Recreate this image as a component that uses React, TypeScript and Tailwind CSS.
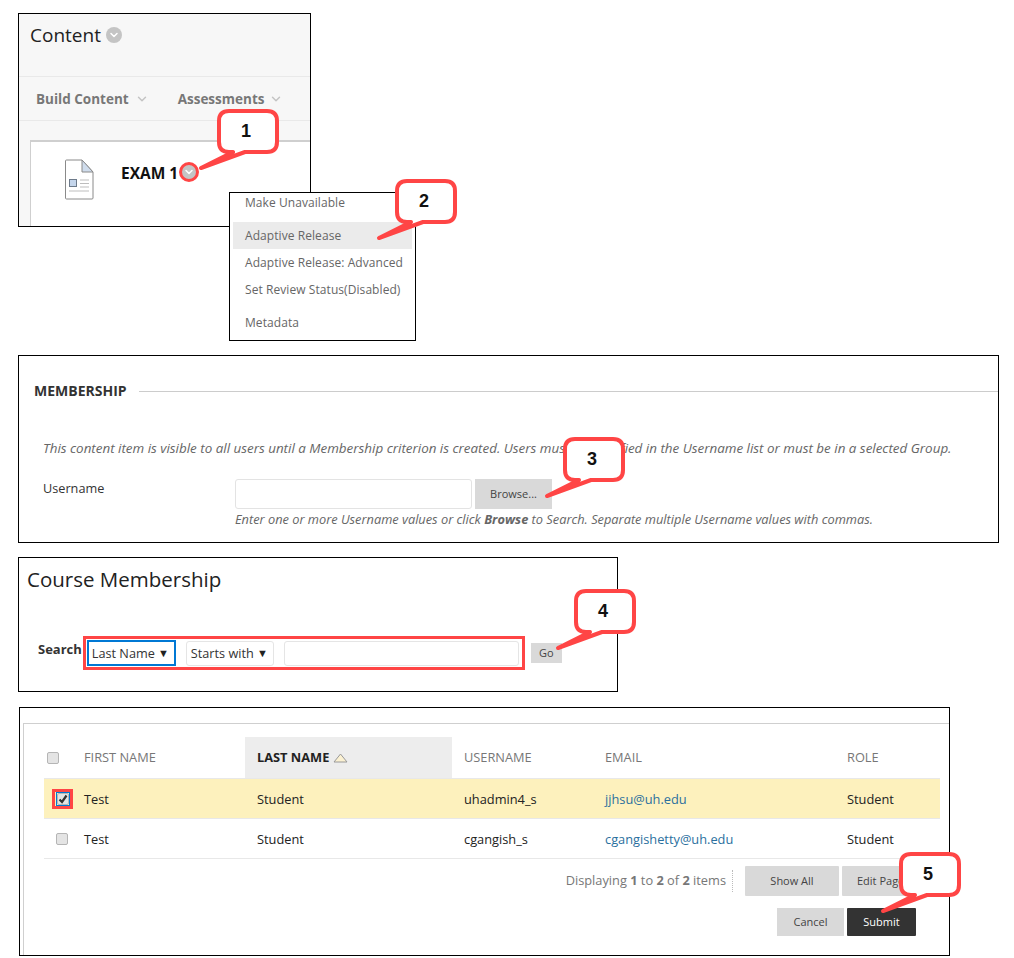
import { ChevronDown } from 'lucide-react';

const openSans = { fontFamily: '"Open Sans", sans-serif' };

function CircleChevron() {
  return (
    <span className="flex h-4 w-4 items-center justify-center rounded-full bg-[#c4c4c4]">
      <ChevronDown className="h-3 w-3 text-white" strokeWidth={3} />
    </span>
  );
}

// numbered red speech bubble, left/top are the bubble's box on the page
function Callout({ n, left, top }: { n: number; left: number; top: number }) {
  return (
    <div className="absolute z-20 h-[45px] w-[62px]" style={{ left, top }}>
      <svg className="absolute -left-[20px] top-0 overflow-visible" width="82" height="66" viewBox="-20 0 82 66">
        <path
          d="M12 2H50Q60 2 60 12V33Q60 43 50 43H28L-16 59L16 43H12Q2 43 2 33V12Q2 2 12 2Z"
          fill="#fff"
          stroke="#ff4545"
          strokeWidth="4"
          strokeLinejoin="round"
        />
      </svg>
      <span className="absolute left-0 top-[9px] w-[58px] text-center font-['Liberation_Sans',sans-serif] text-[18px] leading-[26px] font-bold text-[#111]">
        {n}
      </span>
    </div>
  );
}

function ContentPanel() {
  return (
    <div className="relative flex h-[214px] w-[293px] flex-col border border-black bg-[#f7f7f7]">
      <div className="flex h-[63px] items-start gap-[5px] border-b border-[#e9e9e9] pl-[11px] pt-[7px]">
        <span className="text-[19px] leading-[28px] text-[#222]">Content</span>
        <span className="mt-[6px]">
          <CircleChevron />
        </span>
      </div>
      <div className="flex h-[44px] items-center border-b border-[#e9e9e9] pl-[17px] pt-[1px] text-[13.5px] font-bold text-[#777]">
        <span>Build Content</span>
        <ChevronDown className="ml-[6px] h-[14px] w-[14px] text-[#c4c4c4]" strokeWidth={2.5} />
        <span className="ml-[29px]">Assessments</span>
        <ChevronDown className="ml-[5px] h-[14px] w-[14px] text-[#c4c4c4]" strokeWidth={2.5} />
      </div>
      <div className="flex-1 pl-[11px] pt-[19px]">
        <div className="flex h-full items-start border-l border-t-2 border-[#cfcfcf] bg-white pl-[33px] pt-[17px]">
          <svg width="30" height="41" viewBox="0 0 30 41">
            <path d="M1.5 2a1 1 0 0 1 1-1H18L29 13V39a1 1 0 0 1-1 1H2.5a1 1 0 0 1-1-1Z" fill="#fff" stroke="#8a8a8a" />
            <path d="M18 1L29 13H18Z" fill="#cfdcec" stroke="#8a8a8a" />
            <rect x="5.5" y="20.5" width="7" height="7" fill="#c5d6ec" stroke="#6d7a8a" />
            <path d="M16 21H25M16 24.5H25M16 28H25M5 32H25" stroke="#bdbdbd" />
          </svg>
          <span className="ml-[27px] mt-[4px] text-[15.5px] leading-[20px] font-bold text-[#111]">EXAM 1</span>
          <span className="relative ml-[3px] mt-[5px]">
            <CircleChevron />
            <span className="absolute -inset-[2px] rounded-full border-[3px] border-[#ff4545]" />
          </span>
        </div>
      </div>
    </div>
  );
}

function ContextMenu() {
  const rowClass = 'pl-[12px] text-[12px] leading-[27px] text-[#666] tracking-[0.07px]';
  return (
    <div className="absolute left-[229px] top-[192px] z-10 h-[149px] w-[187px] border border-black bg-white px-[3px]">
      <div className="pl-[12px] text-[12px] leading-[19px] text-[#666] tracking-[0.07px]">Make Unavailable</div>
      <div className={`${rowClass} mt-[10px] bg-[#ebebeb]`}>Adaptive Release</div>
      <div className={rowClass}>Adaptive Release: Advanced</div>
      <div className={rowClass}>Set Review Status(Disabled)</div>
      <div className={`${rowClass} mt-[6px]`}>Metadata</div>
    </div>
  );
}

function MembershipPanel() {
  return (
    <div className="mt-[128px] h-[188px] w-[981px] border border-black bg-white">
      <div className="flex items-center pl-[15px] pt-[26px]">
        <span className="text-[14px] leading-[18px] font-bold text-[#333]">MEMBERSHIP</span>
        <span className="ml-[12px] h-px flex-1 bg-[#cccccc]" />
      </div>
      <p className="mt-[39px] pl-[24px] text-[13.4px] leading-[18px] text-[#666] italic">
        This content item is visible to all users until a Membership criterion is created. Users must be specified in the Username list or must be in a selected Group.
      </p>
      <div className="mt-[22px] flex items-start pl-[24px]">
        <span className="w-[192px] text-[12.7px] leading-[18px] text-[#333]">Username</span>
        <div>
          <div className="flex gap-[3px]">
            <div className="h-[30px] w-[237px] rounded-[3px] border border-[#e3e3e3] bg-white" />
            <div className="flex h-[30px] w-[77px] items-center justify-center bg-[#d9d9d9] text-[11px] text-[#444]">
              Browse...
            </div>
          </div>
          <p className="mt-[1px] text-[12.8px] leading-[18px] text-[#666] italic">
            Enter one or more Username values or click <b>Browse</b> to Search. Separate multiple Username values with commas.
          </p>
        </div>
      </div>
    </div>
  );
}

function SearchPanel() {
  return (
    <div className="mt-[14px] h-[135px] w-[600px] border border-black bg-white">
      <h2 className="pl-[8px] pt-[6px] text-[20.5px] leading-[30px] font-normal text-[#222]">Course Membership</h2>
      <div className="mt-[42px] flex items-start pl-[19px]">
        <span className="mt-[4px] text-[13px] leading-[18px] font-bold text-[#333]">Search</span>
        <div className="ml-[1px] flex h-[34px] w-[442px] items-center border-[3px] border-[#ff4545] pl-[1px] pr-[3px]">
          <div className="flex h-[26px] w-[89px] items-center justify-between border-2 border-[#0078d4] pl-[3px] pr-[5px] pt-[1px] text-[12.7px] text-[#333]">
            <span>Last Name</span>
            <span className="text-[11px] text-[#222]">▼</span>
          </div>
          <div className="ml-[10px] flex h-[25px] w-[88px] items-center justify-between rounded-[3px] border border-[#e5e5e5] pl-[4px] pr-[5px] pt-[1px] text-[12.7px] text-[#333]">
            <span>Starts with</span>
            <span className="text-[11px] text-[#222]">▼</span>
          </div>
          <div className="ml-[10px] h-[25px] flex-1 rounded-[3px] border border-[#e5e5e5]" />
        </div>
        <div className="ml-[6px] mt-[7px] flex h-[20px] w-[31px] items-center justify-center bg-[#d9d9d9] pt-[1px] text-[11px] text-[#444]">
          Go
        </div>
      </div>
    </div>
  );
}

function Checkbox({ checked = false }: { checked?: boolean }) {
  return (
    <span className="flex h-[12px] w-[12px] items-center justify-center rounded-[2px] border border-[#b5b5b5] bg-[#e4e4e4]">
      {checked && (
        <svg width="10" height="10" viewBox="0 0 10 10">
          <path d="M1.5 5.5L4 8L8.5 1.5" fill="none" stroke="#333" strokeWidth="2.2" />
        </svg>
      )}
    </span>
  );
}

const colsClass = 'grid grid-cols-[40px_161px_207px_153px_242px_93px]';
const headClass = 'pt-[1px] text-[12.8px] text-[#777]';

function UsersPanel() {
  const rows = [
    { first: 'Test', last: 'Student', user: 'uhadmin4_s', email: 'jjhsu@uh.edu', selected: true },
    { first: 'Test', last: 'Student', user: 'cgangish_s', email: 'cgangishetty@uh.edu', selected: false },
  ];
  return (
    <div className="ml-px mt-[15px] h-[249px] w-[931px] border border-black bg-white pl-[3px] pt-[15px]">
      <div className="h-[232px] border-l border-t border-[#cfcfcf] pl-[20px] pt-[13px]">
        <div className="w-[896px]">
          <div className={`${colsClass} h-[42px] items-center border-b border-[#e8e8e8]`}>
            <span className="pl-[3px]">
              <Checkbox />
            </span>
            <span className={headClass}>FIRST NAME</span>
            <span className="flex h-full items-center gap-[4px] bg-[#ededed] pl-[12px] pt-[1px] text-[12.8px] font-bold text-[#222]">
              LAST NAME
              <svg width="15" height="10" viewBox="0 0 15 10">
                <path d="M7.5 1L14 9H1Z" fill="#fbf1d2" stroke="#999" />
              </svg>
            </span>
            <span className={`${headClass} pl-[12px]`}>USERNAME</span>
            <span className={headClass}>EMAIL</span>
            <span className={headClass}>ROLE</span>
          </div>
          {rows.map((r) => (
            <div
              key={r.user}
              className={`${colsClass} h-[40px] items-center border-b border-[#e8e8e8] text-[12.8px] text-[#222] ${r.selected ? 'bg-[#fdf1bd]' : 'bg-white'}`}
            >
              {r.selected ? (
                <span className="ml-[8px] flex h-[20px] w-[21px] items-center justify-center border-[3px] border-[#ff4545]">
                  <span className="block border border-[#0078d4]">
                    <Checkbox checked />
                  </span>
                </span>
              ) : (
                <span className="pl-[12px]">
                  <Checkbox />
                </span>
              )}
              <span className="pt-[2px]">{r.first}</span>
              <span className="pl-[12px] pt-[2px]">{r.last}</span>
              <span className="pl-[12px] pt-[2px]">{r.user}</span>
              <span className="pt-[2px] text-[#2a6f9e]">{r.email}</span>
              <span className="pt-[2px]">Student</span>
            </div>
          ))}
          <div className="mt-[7px] flex items-center justify-end">
            <span className="text-[12.8px] text-[#777]">
              Displaying <b>1</b> to <b>2</b> of <b>2</b> items
            </span>
            <span className="ml-[6px] h-[22px] border-l border-dotted border-[#bbb]" />
            <div className="ml-[12px] flex h-[30px] w-[94px] items-center justify-center rounded-[1px] bg-[#d9d9d9] text-[11px] text-[#444]">
              Show All
            </div>
            <div className="ml-[3px] mr-[10px] flex h-[30px] w-[88px] items-center rounded-[1px] bg-[#d9d9d9] pl-[15px] text-[11px] text-[#444]">
              Edit Page
            </div>
          </div>
          <div className="mt-[12px] flex justify-end gap-[3px] pr-[24px]">
            <div className="flex h-[28px] w-[67px] items-center justify-center bg-[#d9d9d9] text-[11px] text-[#444]">
              Cancel
            </div>
            <div className="flex h-[28px] w-[69px] items-center justify-center rounded-[1px] bg-[#333] text-[11px] text-white">
              Submit
            </div>
          </div>
        </div>
      </div>
    </div>
  );
}

export default function App() {
  return (
    <div className="relative h-[958px] w-[1014px] overflow-hidden bg-white pl-[18px] pt-[13px]" style={openSans}>
      <ContentPanel />
      <ContextMenu />
      <MembershipPanel />
      <SearchPanel />
      <UsersPanel />
      <Callout n={1} left={217} top={109} />
      <Callout n={2} left={395} top={179} />
      <Callout n={3} left={563} top={437} />
      <Callout n={4} left={574} top={589} />
      <Callout n={5} left={899} top={852} />
    </div>
  );
}
